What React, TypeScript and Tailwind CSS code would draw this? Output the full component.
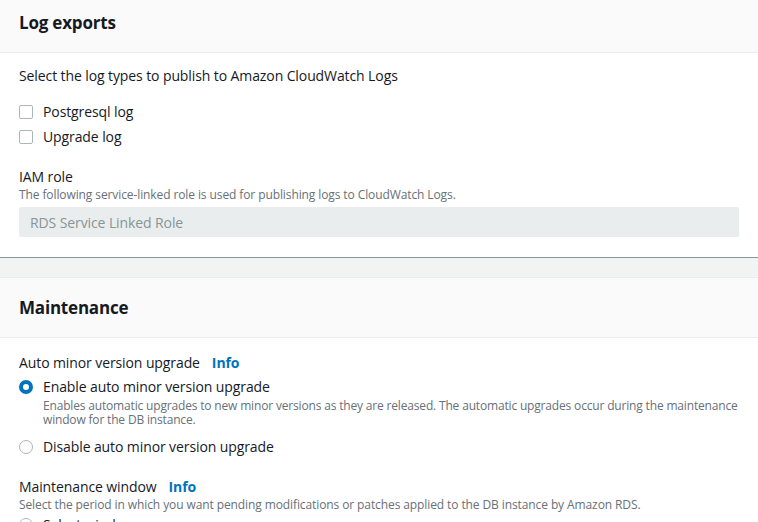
import React from "react";

const font = { fontFamily: '"Open Sans", "Noto Sans", Arial, sans-serif', letterSpacing: "-0.1px" };

function Checkbox({ label }: { label: string }) {
  return (
    <div className="flex items-center h-[20px]">
      <span className="w-[14px] h-[14px] border border-[#aab7b8] rounded-[2px] bg-white" />
      <span className="ml-[10px] text-[14px] text-[#16191f] leading-[20px]">{label}</span>
    </div>
  );
}

function Radio({ label, checked }: { label: string; checked?: boolean }) {
  return (
    <div className="flex items-center h-[20px]">
      {checked ? (
        <span className="w-[14px] h-[14px] rounded-full border-[4px] border-[#0073bb] bg-white" />
      ) : (
        <span className="w-[14px] h-[14px] rounded-full border border-[#aab7b8] bg-white" />
      )}
      <span className="ml-[10px] text-[14px] text-[#16191f] leading-[20px]">{label}</span>
    </div>
  );
}

export default function App() {
  return (
    <div className="w-[758px] h-[522px] overflow-hidden bg-[#f2f3f3]" style={font}>
      {/* Log exports card */}
      <div className="bg-white border-b border-[#879596]">
        <div className="bg-[#fafafa] border-b border-[#eaeded] px-[19px] pt-[10px] pb-[16px]">
          <h2 className="text-[17px] font-bold text-[#16191f] leading-[26px] tracking-[-0.2px]">Log exports</h2>
        </div>
        <div className="px-[19px] pt-[13px] pb-[20px]">
          <p className="text-[14px] leading-[20px] text-[#16191f]">Select the log types to publish to Amazon CloudWatch Logs</p>
          <div className="mt-[16px] flex flex-col gap-[5px]">
            <Checkbox label="Postgresql log" />
            <Checkbox label="Upgrade log" />
          </div>
          <div className="mt-[20px] text-[14px] leading-[20px] text-[#16191f]">IAM role</div>
          <div className="text-[12px] leading-[16px] text-[#687078]">
            The following service-linked role is used for publishing logs to CloudWatch Logs.
          </div>
          <div className="mt-[4px] h-[30px] bg-[#eaeded] rounded-[2px] flex items-center px-[11px] text-[14px] text-[#879596]">
            RDS Service Linked Role
          </div>
        </div>
      </div>

      {/* Maintenance card */}
      <div className="mt-[19px] bg-white border-t border-[#eaeded]">
        <div className="bg-[#fafafa] border-b border-[#eaeded] h-[60px] px-[19px] flex items-center">
          <h2 className="text-[17px] font-bold text-[#16191f] leading-[26px] tracking-[-0.2px]">Maintenance</h2>
        </div>
        <div className="px-[19px] pt-[15px]">
          <div className="flex items-center text-[14px] leading-[20px] text-[#16191f]">
            <span>Auto minor version upgrade</span>
            <span className="ml-[12px] font-bold text-[#0073bb]">Info</span>
          </div>
          <div className="mt-[4px]">
            <Radio label="Enable auto minor version upgrade" checked />
            <div className="ml-[24px] mt-[2px] text-[12px] leading-[14px] text-[#687078] tracking-[-0.17px]">
              Enables automatic upgrades to new minor versions as they are released. The automatic upgrades occur during the maintenance window for the DB instance.
            </div>
          </div>
          <div className="mt-[10px]">
            <Radio label="Disable auto minor version upgrade" />
          </div>
          <div className="mt-[20px] flex items-center text-[14px] leading-[20px] text-[#16191f]">
            <span>Maintenance window</span>
            <span className="ml-[12px] font-bold text-[#0073bb]">Info</span>
          </div>
          <div className="text-[12px] leading-[16px] text-[#687078]">
            Select the period in which you want pending modifications or patches applied to the DB instance by Amazon RDS.
          </div>
          <div className="mt-[2px]">
            <Radio label="Select window" />
          </div>
        </div>
      </div>
    </div>
  );
}
